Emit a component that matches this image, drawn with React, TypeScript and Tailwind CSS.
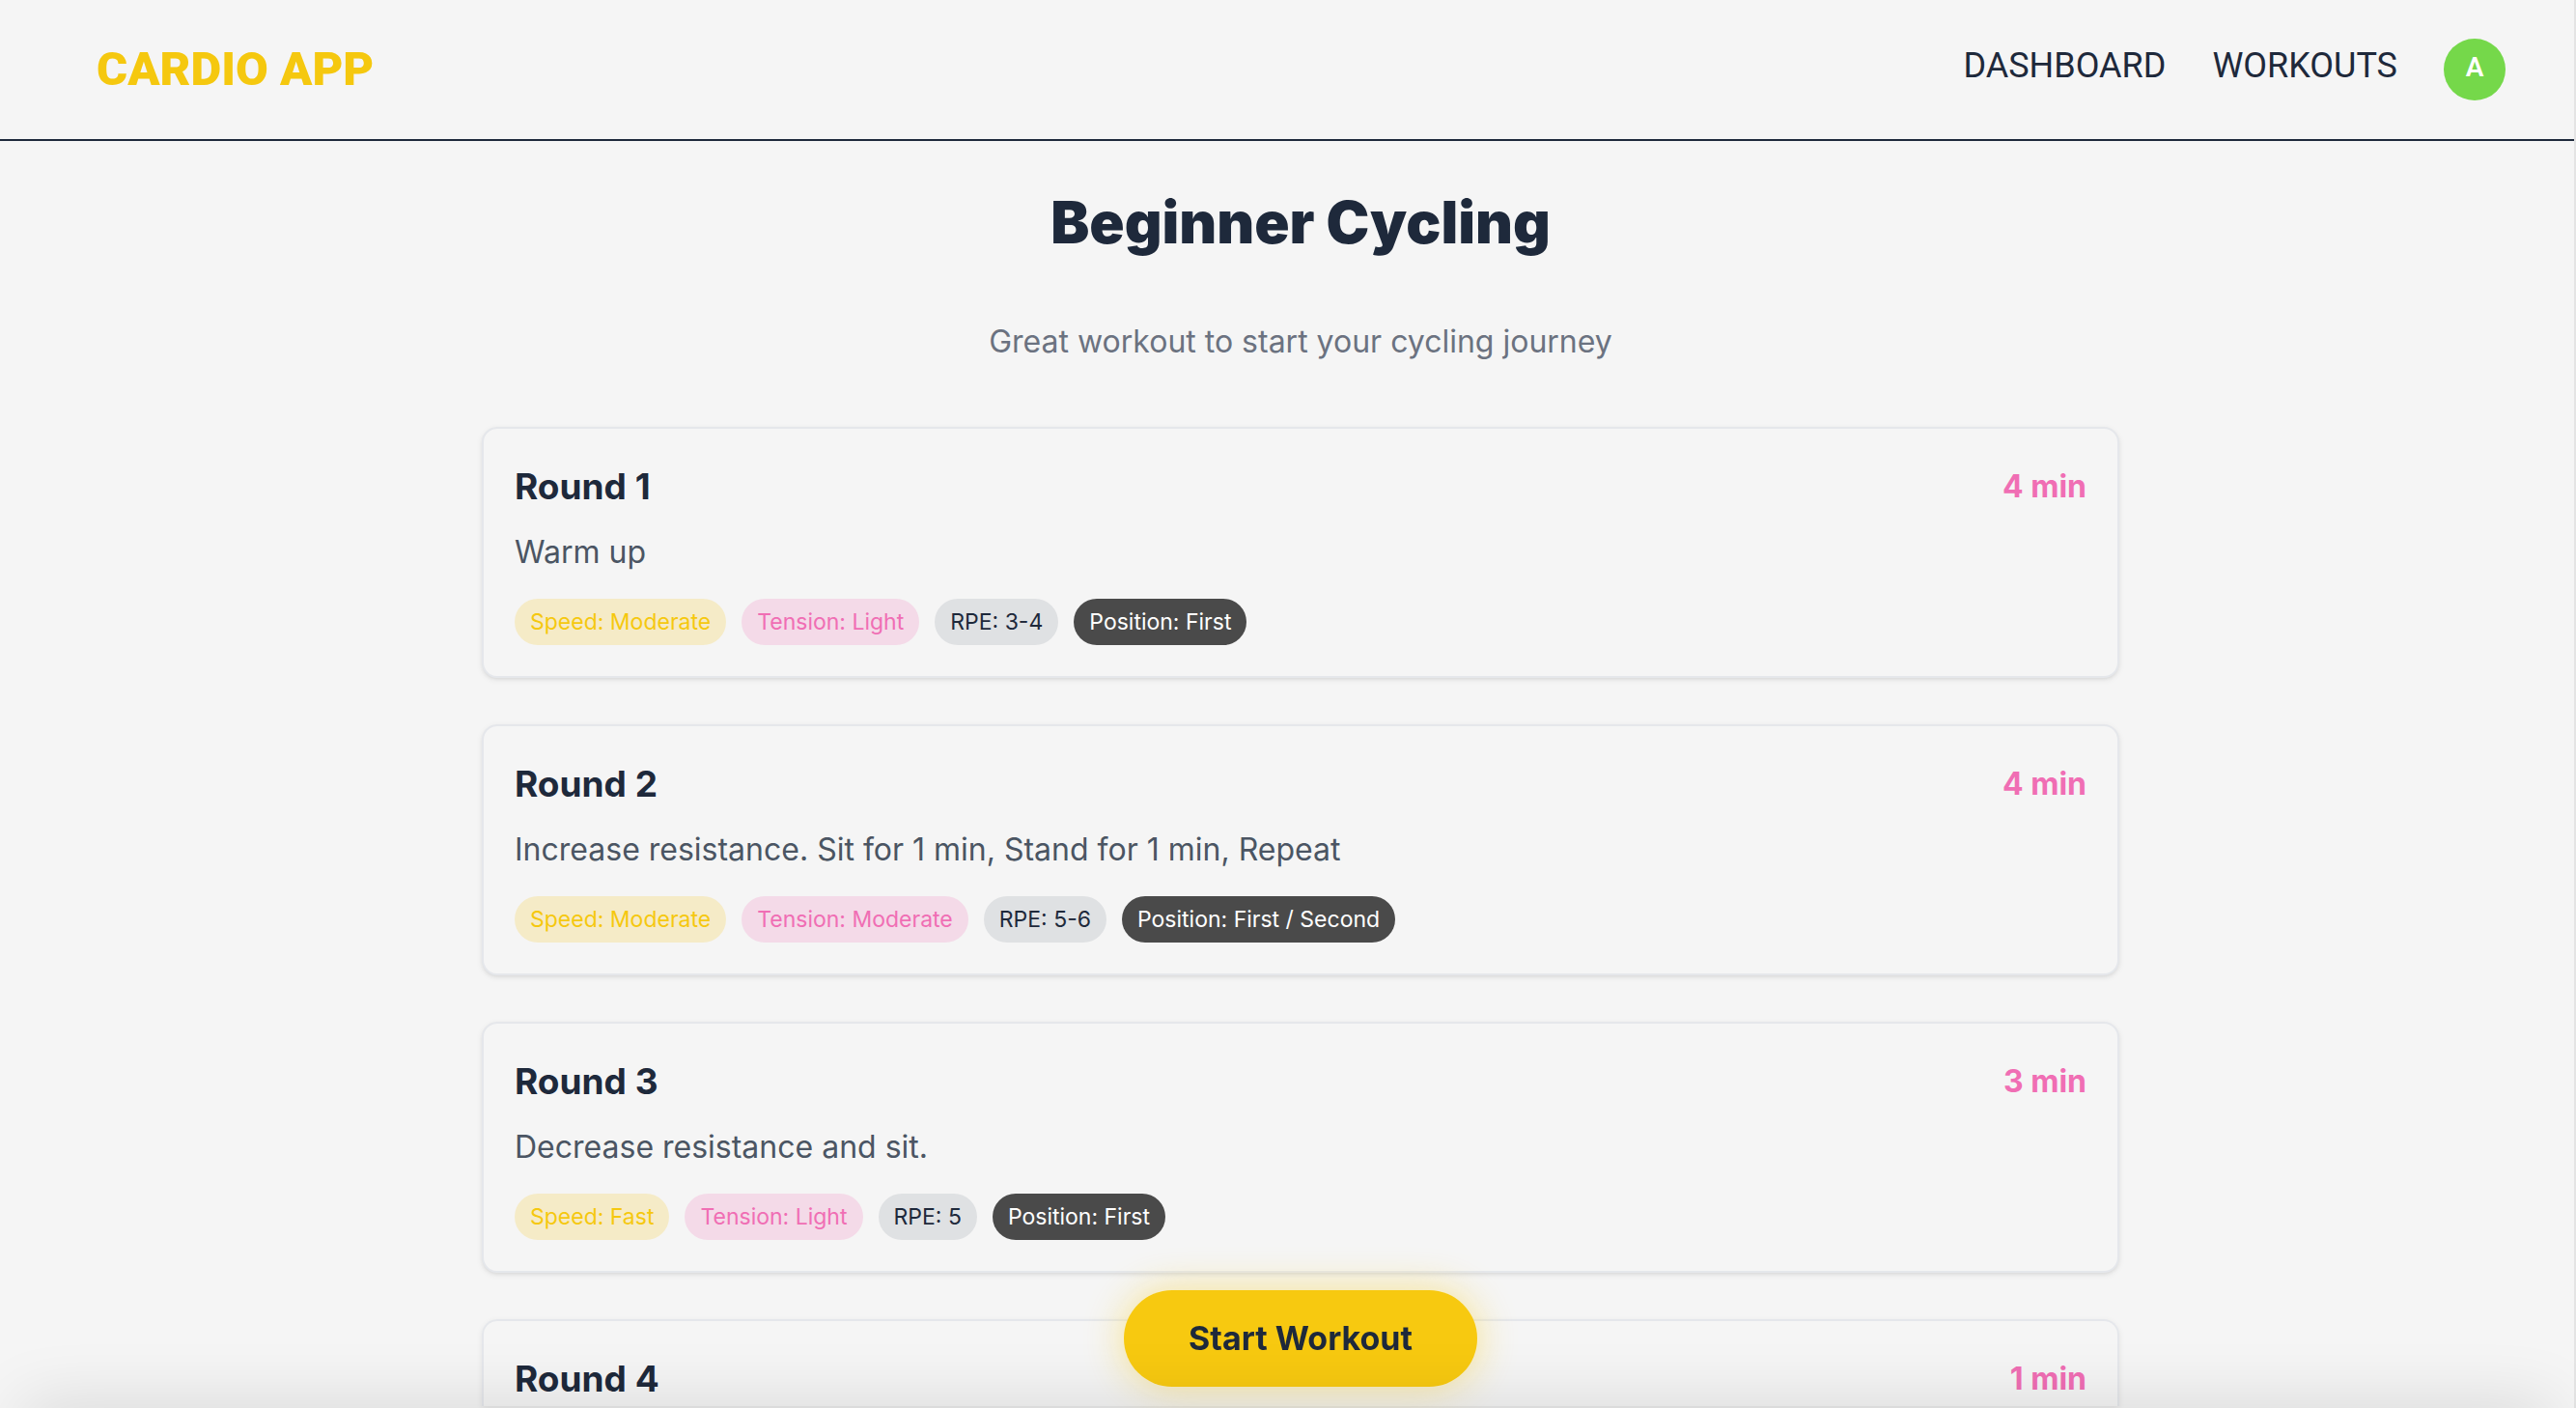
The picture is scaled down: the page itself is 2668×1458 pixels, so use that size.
type Round = {
  title: string;
  minutes: number;
  description: string;
  speed: string;
  tension: string;
  rpe: string;
  position: string;
};

const rounds: Round[] = [
  { title: "Round 1", minutes: 4, description: "Warm up", speed: "Moderate", tension: "Light", rpe: "3-4", position: "First" },
  {
    title: "Round 2",
    minutes: 4,
    description: "Increase resistance. Sit for 1 min, Stand for 1 min, Repeat",
    speed: "Moderate",
    tension: "Moderate",
    rpe: "5-6",
    position: "First / Second",
  },
  { title: "Round 3", minutes: 3, description: "Decrease resistance and sit.", speed: "Fast", tension: "Light", rpe: "5", position: "First" },
];

function Header() {
  return (
    <header className="flex items-center justify-between border-b-2 border-[#1e293b] py-9 pr-[71px] pl-[100px] font-['Roboto',sans-serif]">
      <a href="#home" className="text-[49px] leading-[72px] font-black text-[#f5c80f]">
        CARDIO APP
      </a>
      <nav className="flex items-center gap-12 text-[36px] leading-[56px] text-[#1e293b]">
        <a href="#dashboard" className="pb-2">DASHBOARD</a>
        <a href="#workouts" className="pb-2">WORKOUTS</a>
        <button
          type="button"
          aria-label="Account"
          className="flex size-16 items-center justify-center rounded-full bg-[#75d84a] pb-1 text-[28px] leading-[32px] font-semibold text-white"
        >
          A
        </button>
      </nav>
    </header>
  );
}

function RoundCard({ round }: { round: Round }) {
  return (
    <li className="rounded-2xl border-2 border-[#e5e7eb] bg-[#f5f5f5] p-8 shadow-[0_2px_6px_rgba(0,0,0,0.08),0_2px_4px_-2px_rgba(0,0,0,0.1)]">
      <div className="flex items-center justify-between">
        <h2 className="text-[37px] leading-[56px] font-bold text-[#1e293b]">{round.title}</h2>
        <span className="text-[32px] leading-[48px] font-bold text-[#f06eb4]">{round.minutes} min</span>
      </div>
      <p className="mt-4 text-[32px] leading-[48px] text-[#4b5563]">{round.description}</p>
      <div className="mt-6 flex flex-wrap gap-4 text-[23px] leading-[32px]">
        <span className="rounded-full bg-[#f5ebc7] px-4 py-2 text-[#f5c80f]">Speed: {round.speed}</span>
        <span className="rounded-full bg-[#f4dae8] px-4 py-2 text-[#f06eb4]">Tension: {round.tension}</span>
        <span className="rounded-full bg-[#dfe1e3] px-4 py-2 text-[#1e293b]">RPE: {round.rpe}</span>
        <span className="rounded-full bg-[#4a4a4a] px-4 py-2 text-white">Position: {round.position}</span>
      </div>
    </li>
  );
}

function UpcomingRound() {
  return (
    <li className="flex items-center justify-between rounded-t-2xl border-2 border-b-0 border-[#e5e7eb] p-8 pb-0 shadow-[0_2px_6px_rgba(0,0,0,0.08)]">
      <h2 className="text-[37px] leading-[56px] font-bold text-[#1e293b]">Round 4</h2>
      <span className="text-[32px] leading-[48px] font-bold text-[#f06eb4]">1 min</span>
    </li>
  );
}

export default function App() {
  return (
    <div className="min-h-screen border-r-2 border-[#e4e4e4] bg-[#f5f5f5] font-['Inter',sans-serif]">
      <Header />
      <main className="pt-12 pl-7">
        <div className="mx-auto flex w-full max-w-[1792px] flex-col px-12">
          <h1 className="text-center text-[60px] leading-[72px] font-black text-[#1e293b]">Beginner Cycling</h1>
          <p className="mt-16 text-center text-[32px] leading-[48px] text-[#6b7280]">
            Great workout to start your cycling journey
          </p>
          <ul className="mt-16 flex flex-col gap-12">
            {rounds.map((round) => (
              <RoundCard key={round.title} round={round} />
            ))}
            <UpcomingRound />
          </ul>
        </div>
      </main>
      <div className="fixed inset-x-0 bottom-[22px] flex justify-center pl-[26px]">
        <button
          type="button"
          className="rounded-full bg-[#f7c910] px-[67px] py-[22px] text-[34px] leading-[56px] font-bold text-[#1e293b] shadow-[0_0_40px_rgba(250,204,21,0.45)]"
        >
          Start Workout
        </button>
      </div>
      <div className="pointer-events-none fixed inset-x-0 top-full h-24 shadow-[0_-24px_70px_-24px_rgba(0,0,0,0.15)]" />
    </div>
  );
}
